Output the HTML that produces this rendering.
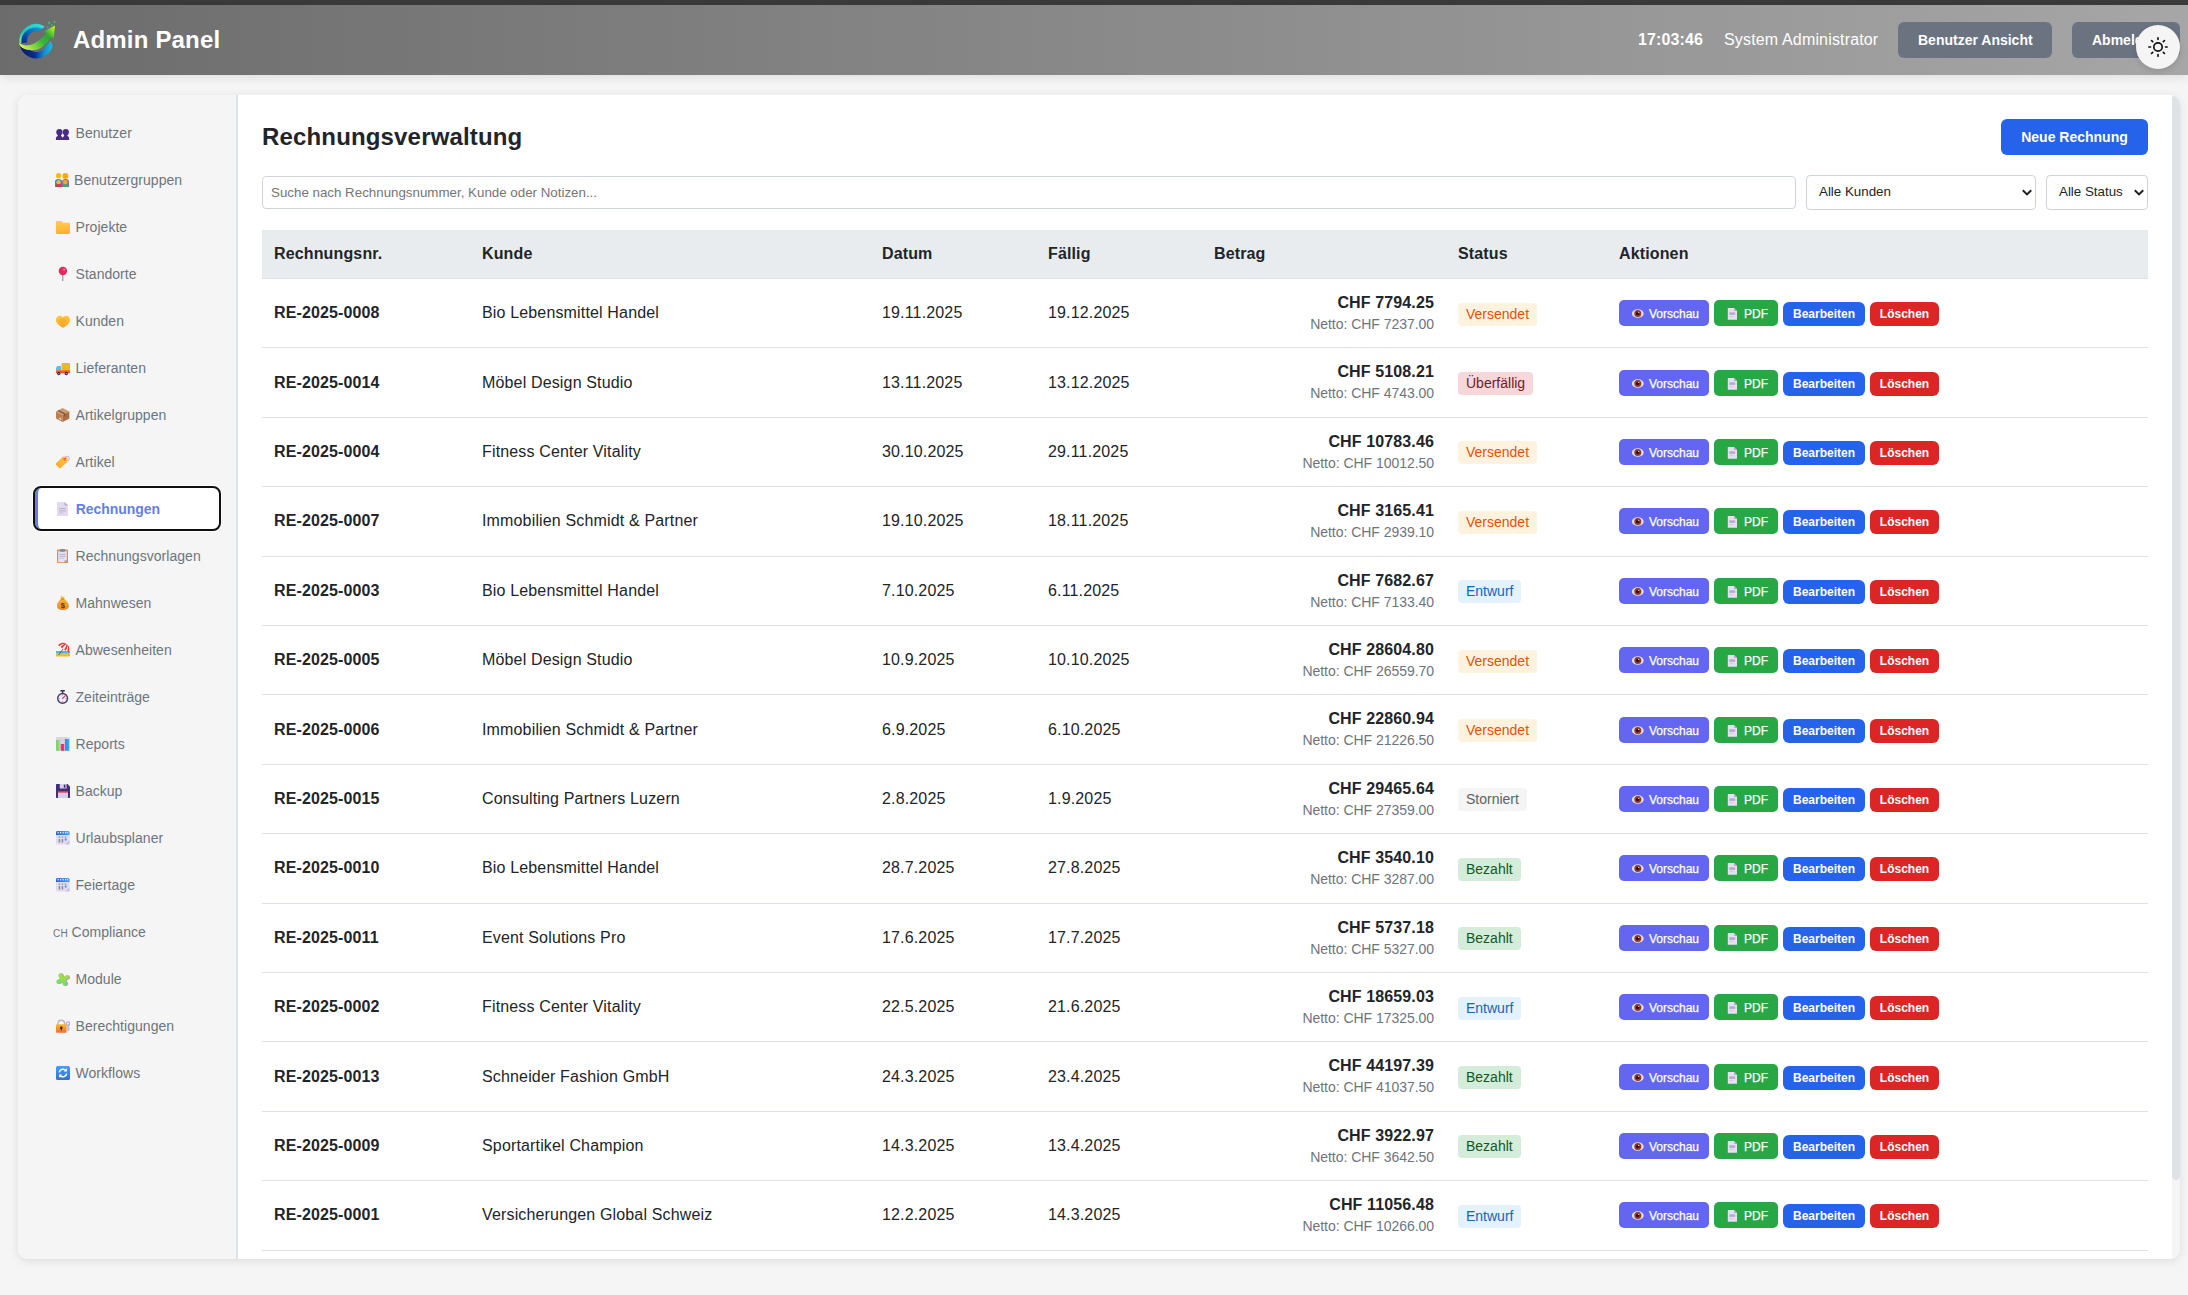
<!DOCTYPE html>
<html lang="de">
<head>
<meta charset="utf-8">
<title>Admin Panel</title>
<style>
*{box-sizing:border-box;margin:0;padding:0}
html,body{width:2188px;height:1295px;overflow:hidden}
body{font-family:"Liberation Sans",Arial,sans-serif;background:#f5f5f5;color:#212529;font-size:16px;line-height:1.5;position:relative}
.topstrip{position:absolute;left:0;top:0;width:2188px;height:5px;background:#3b3b3b}
.header{position:absolute;left:0;top:5px;width:2188px;height:70px;background:linear-gradient(90deg,#6c6c6c 0%,#a6a6a6 100%);box-shadow:0 2px 10px rgba(0,0,0,.1);color:#fff}
.logo{position:absolute;left:12px;top:9px;width:50px;height:50px}
.header h1{position:absolute;left:73px;top:17px;font-size:24px;line-height:36px;font-weight:700;white-space:nowrap;letter-spacing:.18px}
.clock{position:absolute;left:1638px;top:23px;font-size:16px;line-height:24px;font-weight:700;white-space:nowrap;letter-spacing:.12px}
.uname{position:absolute;left:1724px;top:23px;font-size:16px;line-height:24px;white-space:nowrap;letter-spacing:.16px}
.hbtn{position:absolute;top:17px;height:36px;border-radius:6px;background:#6b7280;color:#fff;font-size:14px;font-weight:700;line-height:36px;padding:0 20px;white-space:nowrap}
.toggle{position:absolute;left:2136px;top:25px;width:44px;height:44px;border-radius:50%;background:#f5f5f5;box-shadow:0 2px 6px rgba(0,0,0,.12)}
.toggle svg{position:absolute;left:12px;top:12px;width:20px;height:20px}
.panel{position:absolute;left:18px;top:95px;width:2162px;height:1164px;border-radius:10px;background:#fff;box-shadow:0 2px 10px rgba(0,0,0,.1);overflow:hidden}
.sidebar{position:absolute;left:0;top:0;width:220px;height:1164px;background:#f5f5f5;border-right:2px solid #dee2e6}
.nav{position:absolute;left:17px;width:184px;height:40.4px;border-radius:6px;color:#6c757d;font-size:14px;line-height:41px;white-space:nowrap;border-left:3px solid transparent}
.nav .ic{position:absolute;left:16px;top:12.8px;width:16px;height:16px}
.nav .ch{position:absolute;left:15px;top:1.8px;font-size:10px;letter-spacing:.3px}
.nav .tx{position:absolute;left:37.500px;top:.8px;letter-spacing:.04px}
.nav.active{background:#fff;color:#667eea;font-weight:700;border-left-color:#667eea;outline:2px solid #101010;box-shadow:0 0 0 3px #fff}
.nav.active .tx{left:37.800px;letter-spacing:-.06px}
.main{position:absolute;left:220px;top:0;width:1934px;height:1164px;background:#fff}
.sbar{position:absolute;left:2154px;top:0;width:8px;height:1164px;background:#f5f5f5}
.sbar i{position:absolute;left:0;top:0;width:8px;height:1085px;background:#dee2e6;border-radius:4px}
h2{position:absolute;left:244px;top:24px;font-size:24px;line-height:36px;font-weight:700;color:#212529;white-space:nowrap;letter-spacing:.16px}
.newbtn{position:absolute;left:1983px;top:24px;width:147px;height:36px;border-radius:6px;background:#2563eb;color:#fff;font-size:14px;font-weight:700;line-height:36px;text-align:center}
.search{position:absolute;left:244px;top:81px;width:1534px;height:33px;border:1px solid #ced4da;border-radius:4px;background:#fff;font-size:13.333px;line-height:31px;padding-left:8px;color:#757575;white-space:nowrap}
.sel{position:absolute;top:80px;height:35px;border:1px solid #ced4da;border-radius:4px;background:#fff;font-size:13.333px;line-height:31.500px;padding-left:12px;color:#212529;white-space:nowrap}
.sel svg{position:absolute;right:3px;top:13px;width:10px;height:7px}
table{position:absolute;left:244px;top:135px;width:1886px;border-collapse:separate;border-spacing:0;table-layout:fixed}
th{background:#e9ecef;text-align:left;font-weight:700;font-size:16px;padding:12px;border-bottom:1px solid #dee2e6;color:#212529;line-height:24px;letter-spacing:.14px}
td{padding:12px;border-bottom:1px solid #dee2e6;font-size:16px;line-height:24px;vertical-align:middle;white-space:nowrap;letter-spacing:.155px}
td.num{text-align:right}
td small{display:block;font-size:14px;line-height:20.4px;color:#6c757d;letter-spacing:-.04px;position:relative;top:-1px}
.b{font-weight:700;letter-spacing:.13px}
.badge{letter-spacing:0;position:relative;top:.2px;display:inline-block;height:23px;line-height:23px;padding:0 8px;border-radius:4px;font-size:14px;vertical-align:middle}
.s-sent{background:#fff3e0;color:#e65100}
.s-over{background:#f8d7da;color:#721c24}
.s-draft{background:#e3f2fd;color:#1565c0}
.s-canc{background:#f5f5f5;color:#616161}
.s-paid{background:#d4edda;color:#155724}
.acts{display:flex;align-items:flex-end;gap:5px;height:26px}
.ab{letter-spacing:0;display:block;color:#fff;font-size:12px;white-space:nowrap;position:relative}
.ab.v{width:90px;height:26px;background:#6366f1;border-radius:5px;line-height:28px;padding-left:30px}
.ab.p{width:64px;height:26px;background:#28a745;border-radius:5px;line-height:28px;padding-left:30px}
.ab.e{width:82px;height:24px;background:#2563eb;border-radius:6px;line-height:24px;text-align:center;font-weight:700}
.ab.d{width:69px;height:24px;background:#dc2626;border-radius:6px;line-height:24px;text-align:center;font-weight:700}
.ab svg{position:absolute;left:13px;top:7px;width:12px;height:13px}
.ab.v,.ab.p{-webkit-text-stroke:.25px #fff}
</style>
</head>
<body>
<div class="topstrip"></div>
<div class="header">
<svg class="logo" viewBox="0 0 50 50">
<defs>
<linearGradient id="lgA" x1="0.9" y1="0" x2="0.1" y2="1"><stop offset="0" stop-color="#1fb6d9"/><stop offset="0.45" stop-color="#0a6fc4"/><stop offset="1" stop-color="#0a2585"/></linearGradient>
<linearGradient id="lgR" x1="1" y1="0" x2="0" y2="1"><stop offset="0" stop-color="#3fdcd8"/><stop offset="0.6" stop-color="#1fc4b4"/><stop offset="1" stop-color="#8fe07a"/></linearGradient>
<linearGradient id="lgB" x1="0" y1="0" x2="1" y2="0"><stop offset="0" stop-color="#0a1a78"/><stop offset="0.45" stop-color="#0a2a8c"/><stop offset="0.75" stop-color="#1590cf"/><stop offset="1" stop-color="#19bfe0"/></linearGradient>
<linearGradient id="lgG" x1="0" y1="0.75" x2="1" y2="0.1"><stop offset="0" stop-color="#d8ee58"/><stop offset="0.2" stop-color="#96dc3e"/><stop offset="0.5" stop-color="#38b63a"/><stop offset="0.72" stop-color="#2aa838"/><stop offset="0.88" stop-color="#7ad62c"/><stop offset="1" stop-color="#c0f41a"/></linearGradient>
</defs>
<path d="M32.8 12.4A17 17 0 0 0 7.37 29.6L15.3 28.5A9.4 9.4 0 0 1 27.2 17.6Z" fill="url(#lgA)"/>
<path d="M32.8 12.4A17 17 0 0 0 7.37 29.6L9.4 29.3A14.6 14.6 0 0 1 30 14.6Z" fill="url(#lgR)"/>
<path d="M7.8 31.6A17 17 0 0 0 40.7 32L38.6 27L33.5 32.6A10.5 10.5 0 0 1 14.5 31Z" fill="url(#lgB)"/>
<path d="M7.1 28.6C9.5 31.3 13 31.6 17.4 31C21.5 30.4 27.5 26.5 34.4 19.7L31.7 17.4L43 11.6L41.7 24.7L39.3 23C36 28.5 31.5 33 26 35.2C20 37.4 12 36.3 8.3 32.2C7.5 31 7.1 29.8 7.1 28.6Z" fill="url(#lgG)"/>
<rect x="36.2" y="7.8" width="2" height="1.9" rx=".5" fill="#2fc890"/><rect x="41.7" y="6.9" width="1.8" height="1.8" rx=".5" fill="#52c636"/><rect x="38.8" y="10" width="1.8" height="1.8" rx=".5" fill="#3cc04a"/><rect x="34.7" y="11.9" width="1.8" height="1.8" rx=".5" fill="#19b5d8"/>
</svg>
<h1>Admin Panel</h1>
<span class="clock">17:03:46</span>
<span class="uname">System Administrator</span>
<span class="hbtn" style="left:1898px;width:154px">Benutzer Ansicht</span>
<span class="hbtn" style="left:2072px;width:108px">Abmelden</span>
</div>
<div class="toggle"><svg viewBox="0 0 24 24" fill="none" stroke="#111" stroke-width="2" stroke-linecap="round"><circle cx="12" cy="12" r="5"/><path d="M12 1v2M12 21v2M4.22 4.22l1.42 1.42M18.36 18.36l1.42 1.42M1 12h2M21 12h2M4.22 19.78l1.42-1.42M18.36 5.64l1.42-1.42"/></svg></div>
<div class="panel">
<div class="sidebar">
<div class="nav" style="top:17.2px"><svg class="ic" viewBox="0 0 16 16"><g fill="#452c88"><circle cx="5.4" cy="7.200" r="3.100"/><circle cx="11.800" cy="7.200" r="3.100"/><rect x="3.800" y="8" width="3.200" height="4"/><rect x="10.200" y="8" width="3.200" height="4"/><path d="M1.9 14.9v-1.6c0-1.5 1.4-2.6 3.5-2.6s3.3 1 3.3 2.6c0-1.6 1.2-2.6 3.1-2.6 2.100 0 3.300 1.100 3.300 2.600v1.600z"/></g></svg><span class="tx">Benutzer</span></div>
<div class="nav" style="top:64.2px"><svg class="ic" viewBox="0 0 16 16"><circle cx="4.6" cy="3.6" r="2.7" fill="#fbb81d"/><circle cx="11.4" cy="3.9" r="3" fill="#f9a81a"/><path d="M1 14.900V9.500c0-1.500 1.300-2.600 3.600-2.600s3.400 1.100 3.400 2.600v5.400z" fill="#3f7fe0"/><path d="M8 14.900V9.700c0-1.500 1.300-2.700 3.500-2.700s3.500 1.200 3.500 2.700v5.200z" fill="#8d65c5"/><circle cx="4.600" cy="10.200" r="2.200" fill="#fbb81d"/><circle cx="11.300" cy="10.300" r="2.300" fill="#f9a81a"/><rect x="2" y="12.200" width="5.400" height="2.700" rx=".8" fill="#e8323c"/><rect x="8.600" y="12.200" width="5.600" height="2.700" rx=".8" fill="#2fb55a"/></svg><span class="tx" style="left:36.1px">Benutzergruppen</span></div>
<div class="nav" style="top:111.2px"><svg class="ic" viewBox="0 0 16 16"><defs><linearGradient id="gF" x1="0" y1="0" x2="0" y2="1"><stop offset="0" stop-color="#ffd04a"/><stop offset="1" stop-color="#ffad33"/></linearGradient></defs><path d="M1.900 3.100c0-.7.500-1.200 1.200-1.200h3.700c.5 0 .9.200 1.200.6l.9 1.200h6c.7 0 1.100.5 1.100 1.100v9c0 .6-.5 1.100-1.100 1.100H3c-.6 0-1.100-.5-1.100-1.100z" fill="url(#gF)"/></svg><span class="tx">Projekte</span></div>
<div class="nav" style="top:158.2px"><svg class="ic" viewBox="0 0 16 16"><rect x="8.300" y="8.500" width="1" height="6.500" fill="#8c7fa0"/><circle cx="8.900" cy="5" r="4.200" fill="#e6265c"/><circle cx="10.200" cy="3.500" r="1.100" fill="#ff8fb0"/></svg><span class="tx">Standorte</span></div>
<div class="nav" style="top:205.2px"><svg class="ic" viewBox="0 0 16 16"><defs><linearGradient id="gH" x1="0" y1="0" x2="0" y2="1"><stop offset="0" stop-color="#ffc83d"/><stop offset="1" stop-color="#f5a623"/></linearGradient></defs><path d="M2 6.800c0-2.400 1.700-4.100 3.600-4.100 1.400 0 2.600.700 3.400 1.700.8-1 2-1.700 3.400-1.700 1.900 0 3.600 1.700 3.600 4.100 0 3.800-4.200 6.600-7 8-2.800-1.400-7-4.200-7-8z" fill="url(#gH)"/><path d="M5 7.500l4.500 4M6.500 6l4.500 4M8.500 5l3.500 3.200" stroke="#e89a1a" stroke-width=".8" fill="none"/></svg><span class="tx">Kunden</span></div>
<div class="nav" style="top:252.2px"><svg class="ic" viewBox="0 0 16 16"><rect x="7.500" y="3" width="8.500" height="8" rx="1" fill="#e6b832"/><path d="M2 10.500V8l1.200-2h3.800v4.500z" fill="#4fc3f7"/><rect x="2" y="10.300" width="14" height="3" rx=".8" fill="#f4511e"/><rect x="2" y="10.300" width="14" height="1" fill="#ff7a3a"/><circle cx="4.800" cy="13.500" r="1.700" fill="#3a2566"/><circle cx="12.300" cy="13.500" r="1.700" fill="#3a2566"/><circle cx="4.800" cy="13.500" r=".6" fill="#c9b8e8"/><circle cx="12.300" cy="13.500" r=".6" fill="#c9b8e8"/></svg><span class="tx">Lieferanten</span></div>
<div class="nav" style="top:299.2px"><svg class="ic" viewBox="0 0 16 16"><path d="M8.600 1L15.300 4.500 8.600 8 2 4.500z" fill="#d19a68"/><path d="M2 4.500L8.600 8v7L2 11.500z" fill="#bd7f50"/><path d="M15.300 4.500L8.600 8v7l6.700-3.500z" fill="#a96d42"/><path d="M4.800 3l6.700 3.500v2.300l-1.600.8V7.300L3.300 3.800z" fill="#7d5a48"/><rect x="5.300" y="10.500" width="1.800" height="1.600" fill="#e8e0f0" transform="skewY(27) translate(0 -2.800)"/></svg><span class="tx">Artikelgruppen</span></div>
<div class="nav" style="top:346.2px"><svg class="ic" viewBox="0 0 16 16"><defs><linearGradient id="gT" x1="1" y1="0" x2="0" y2="1"><stop offset="0" stop-color="#ffc83d"/><stop offset="1" stop-color="#ffa52a"/></linearGradient></defs><circle cx="13" cy="4.500" r="2.300" fill="none" stroke="#b9a6e0" stroke-width=".9"/><path d="M2.200 9.300L8.300 2.900c.3-.3.700-.4 1.100-.4l3.100.3c.6.100 1 .5 1 1.100l.2 3.200c0 .4-.1.800-.4 1L6.700 14c-.5.500-1.200.5-1.600 0L2.200 11c-.5-.5-.5-1.200 0-1.700z" fill="url(#gT)"/><circle cx="10.800" cy="5.300" r="1.200" fill="#e8323c"/><circle cx="10.800" cy="5.300" r=".5" fill="#f5f5f5"/></svg><span class="tx">Artikel</span></div>
<div class="nav active" style="top:393.2px"><svg class="ic" viewBox="0 0 16 16"><path d="M3 2c0-.6.400-1 1-1h6.500L14 4.500V14c0 .6-.4 1-1 1H4c-.6 0-1-.4-1-1z" fill="#e3daee"/><path d="M10.500 1v2.500c0 .600.400 1 1 1H14z" fill="#b6a8cc"/><rect x="5" y="7" width="7" height="1.200" fill="#bdb3ca"/><rect x="5" y="9.300" width="7" height="1.200" fill="#bdb3ca"/><rect x="5" y="11.500" width="4.500" height="1" fill="#c9c0d6"/></svg><span class="tx">Rechnungen</span></div>
<div class="nav" style="top:440.2px"><svg class="ic" viewBox="0 0 16 16"><rect x="3" y="1.500" width="11" height="13.500" rx="1" fill="#dc8e52"/><path d="M4.200 3.200h8.600v8.800L10 14.200H4.200z" fill="#e8e2f2"/><path d="M12.800 12L10 14.200V12z" fill="#c9bfd8"/><rect x="6" y="1" width="5" height="2.800" rx=".8" fill="#8b8597"/><rect x="5.300" y="5.800" width="6.400" height="1" fill="#b9b1c6"/><rect x="5.300" y="7.800" width="6.400" height="1" fill="#b9b1c6"/><rect x="5.300" y="9.800" width="4.500" height="1" fill="#c5bdd2"/></svg><span class="tx">Rechnungsvorlagen</span></div>
<div class="nav" style="top:487.2px"><svg class="ic" viewBox="0 0 16 16"><defs><linearGradient id="gM" x1="0" y1="0" x2="0" y2="1"><stop offset="0" stop-color="#fbb62e"/><stop offset="1" stop-color="#e88a28"/></linearGradient></defs><path d="M6.300 1.700L8 1l.8 1 1.700-.600-.400 2.300H7z" fill="#f9c23c"/><path d="M7 3.700h3.100c.5 1 4.800 3.300 4.800 7.200 0 2.700-2.500 4-6.200 4S3 13.600 3 10.900c0-3.900 3.500-6.200 4-7.200z" fill="url(#gM)"/><rect x="6.700" y="3.500" width="3.800" height="1" rx=".5" fill="#c9731e"/><text x="8.900" y="13" font-family="Liberation Sans,sans-serif" font-size="7.500" font-weight="700" fill="#5b3420" text-anchor="middle">$</text></svg><span class="tx">Mahnwesen</span></div>
<div class="nav" style="top:534.2px"><svg class="ic" viewBox="0 0 16 16"><rect x="2" y="9" width="14" height="2.500" fill="#4ab8ea"/><path d="M2 11h14v2.500c0 .6-.4 1-1 1H3c-.6 0-1-.4-1-1z" fill="#fcb72a"/><path d="M9.500 6.500L4.500 13" stroke="#6b4a3a" stroke-width=".9"/><g transform="rotate(35 9.500 6.500)"><path d="M3.300 7c0-3.400 2.800-6 6.200-6s6.200 2.600 6.200 6z" fill="#f8312f"/><path d="M6.300 7c.2-3 1.300-5.500 3.200-6 -1.500.3-4 2.300-4.800 6zM12.700 7c-.2-3-1.300-5.500-3.200-6 1.500.3 4 2.300 4.800 6z" fill="#fff"/><path d="M8.300 7c.1-2.600.5-5 1.200-6 .7 1 1.100 3.400 1.200 6z" fill="#fff"/></g></svg><span class="tx">Abwesenheiten</span></div>
<div class="nav" style="top:581.2px"><svg class="ic" viewBox="0 0 16 16"><rect x="6.300" y="1" width="4.600" height="1.600" rx=".6" fill="#3a3163"/><rect x="7.900" y="2" width="1.400" height="2" fill="#3a3163"/><circle cx="8.600" cy="9.400" r="5.600" fill="#433b6b"/><circle cx="8.600" cy="9.400" r="4.200" fill="#efeaf6"/><path d="M8.600 9.400L11 6.800" stroke="#e8323c" stroke-width="1.100" stroke-linecap="round"/><g fill="#6b6488"><rect x="8.300" y="5.600" width=".6" height="1"/><rect x="8.300" y="12.200" width=".6" height="1"/><rect x="4.800" y="9.100" width="1" height=".6"/><rect x="11.400" y="9.100" width="1" height=".6"/></g></svg><span class="tx">Zeiteinträge</span></div>
<div class="nav" style="top:628.2px"><svg class="ic" viewBox="0 0 16 16"><defs><linearGradient id="gG" x1="0" y1="0" x2="1" y2="0"><stop offset="0" stop-color="#5fd068"/><stop offset="1" stop-color="#a5e85a"/></linearGradient><linearGradient id="gB" x1="0" y1="0" x2="1" y2="0"><stop offset="0" stop-color="#2a8df0"/><stop offset="1" stop-color="#38b0f8"/></linearGradient></defs><rect x="2" y="1" width="13.300" height="13.800" fill="#dcd6e6"/><path d="M6.400 1v13.800M10.600 1v13.800M2 4.500h13.300M2 8h13.300M2 11.500h13.300" stroke="#c9c2d6" stroke-width=".5"/><rect x="2.200" y="4" width="3.800" height="10.800" fill="url(#gG)"/><rect x="6.800" y="8" width="3.400" height="6.800" fill="#e8336d"/><rect x="11" y="3" width="4.300" height="11.800" fill="url(#gB)"/></svg><span class="tx">Reports</span></div>
<div class="nav" style="top:675.2px"><svg class="ic" viewBox="0 0 16 16"><path d="M2 2c0-.6.400-1 1-1h10.500L16 3.500V14c0 .6-.4 1-1 1H3c-.6 0-1-.4-1-1z" fill="#3f2f7a"/><rect x="5.800" y="1" width="6.800" height="4.500" fill="#d8d0e8"/><rect x="9.800" y="1.600" width="1.600" height="3.200" fill="#3f2f7a"/><rect x="4" y="8" width="10" height="7" fill="#d6cde8"/><rect x="4" y="8" width="10" height="1.600" fill="#e8323c"/></svg><span class="tx">Backup</span></div>
<div class="nav" style="top:722.2px"><svg class="ic" viewBox="0 0 16 16"><defs><linearGradient id="gC" x1="0" y1="0" x2="1" y2="0"><stop offset="0" stop-color="#2b5fd0"/><stop offset="1" stop-color="#4aa0f4"/></linearGradient></defs><rect x="2" y="1" width="13.600" height="13.600" rx="1.500" fill="#e2daef"/><path d="M2 5V2.500C2 1.700 2.700 1 3.500 1h10.600c.8 0 1.500.7 1.500 1.500V5z" fill="url(#gC)"/><g fill="#eaf2ff"><rect x="3.500" y="1.800" width="1.200" height="1.600"/><rect x="6" y="1.800" width="1.200" height="1.600"/><rect x="8.500" y="1.800" width="1.200" height="1.600"/><rect x="11" y="1.800" width="1.200" height="1.600"/><rect x="13.300" y="1.800" width="1" height="1.600"/></g><g fill="#8d86a0"><rect x="4.700" y="6.500" width="1.500" height="1.200"/><rect x="7.700" y="6.500" width="1.500" height="1.200"/><rect x="10.700" y="6.500" width="1.500" height="1.200"/><rect x="4.700" y="9" width="1.500" height="3.500"/><rect x="7.700" y="9" width="1.500" height="3.500"/></g><path d="M10.500 8.800h2.300l-1 2.500z" fill="#2f7fe8"/><path d="M15.600 10.500V13c0 .9-.7 1.600-1.600 1.600h-2.500z" fill="#c9bfe0"/></svg><span class="tx">Urlaubsplaner</span></div>
<div class="nav" style="top:769.2px"><svg class="ic" viewBox="0 0 16 16"><defs><linearGradient id="gC2" x1="0" y1="0" x2="1" y2="0"><stop offset="0" stop-color="#2b5fd0"/><stop offset="1" stop-color="#4aa0f4"/></linearGradient></defs><rect x="2" y="1" width="13.600" height="13.600" rx="1.500" fill="#e2daef"/><path d="M2 5V2.500C2 1.700 2.700 1 3.500 1h10.600c.8 0 1.500.7 1.500 1.500V5z" fill="url(#gC2)"/><g fill="#eaf2ff"><rect x="3.500" y="1.800" width="1.200" height="1.600"/><rect x="6" y="1.800" width="1.200" height="1.600"/><rect x="8.500" y="1.800" width="1.200" height="1.600"/><rect x="11" y="1.800" width="1.200" height="1.600"/><rect x="13.300" y="1.800" width="1" height="1.600"/></g><g fill="#8d86a0"><rect x="4.700" y="6.500" width="1.500" height="1.200"/><rect x="7.700" y="6.500" width="1.500" height="1.200"/><rect x="10.700" y="6.500" width="1.500" height="1.200"/><rect x="4.700" y="9" width="1.500" height="3.500"/><rect x="7.700" y="9" width="1.500" height="3.500"/></g><path d="M10.500 8.800h2.300l-1 2.500z" fill="#2f7fe8"/><path d="M15.600 10.500V13c0 .9-.7 1.600-1.600 1.600h-2.500z" fill="#c9bfe0"/></svg><span class="tx">Feiertage</span></div>
<div class="nav" style="top:816.2px"><span class="ch">CH</span><span class="tx" style="left:33.5px">Compliance</span></div>
<div class="nav" style="top:863.2px"><svg class="ic" viewBox="0 0 16 16"><defs><linearGradient id="gP" x1="0" y1="1" x2="1" y2="0"><stop offset="0" stop-color="#5fe070"/><stop offset="1" stop-color="#c4d838"/></linearGradient></defs><g transform="rotate(-28 8.600 8.500)"><path id="pz" d="M6.500 3.800a2.100 2.100 0 0 1 4.200 0v2.600h2.600a2.100 2.100 0 0 1 0 4.200h-2.600v2.600a2.100 2.100 0 0 1-4.200 0v-2.600H3.900a2.100 2.100 0 0 1 0-4.200h2.600z" fill="#a58ad0" transform="translate(.8 .6)"/><path d="M6.500 3.800a2.100 2.100 0 0 1 4.200 0v2.600h2.600a2.100 2.100 0 0 1 0 4.200h-2.600v2.600a2.100 2.100 0 0 1-4.200 0v-2.600H3.900a2.100 2.100 0 0 1 0-4.200h2.600z" fill="url(#gP)"/></g></svg><span class="tx">Module</span></div>
<div class="nav" style="top:910.2px"><svg class="ic" viewBox="0 0 16 16"><defs><linearGradient id="gL" x1="0" y1="0" x2="0" y2="1"><stop offset="0" stop-color="#fcb92c"/><stop offset="1" stop-color="#f46e2a"/></linearGradient></defs><circle cx="14" cy="5.600" r="1.700" fill="none" stroke="#b7a6db" stroke-width="1.300"/><path d="M13.400 7.200h1.300v5.600l-.650.700-.650-.700z" fill="#b7a6db"/><rect x="14.500" y="9.500" width="1.200" height="1" fill="#b7a6db"/><rect x="14.500" y="11.300" width="1" height=".9" fill="#b7a6db"/><path d="M4 7V5.600a3.300 3.300 0 0 1 6.600 0V7" fill="none" stroke="#b9b4c6" stroke-width="1.400"/><rect x="2" y="6.300" width="10.600" height="8.500" rx="1" fill="url(#gL)"/><circle cx="7.300" cy="9.700" r="1.200" fill="#2a1a4a"/><rect x="6.800" y="10" width="1" height="2.600" rx=".4" fill="#2a1a4a"/></svg><span class="tx">Berechtigungen</span></div>
<div class="nav" style="top:957.2px"><svg class="ic" viewBox="0 0 16 16"><defs><linearGradient id="gW" x1="0" y1="0" x2="0" y2="1"><stop offset="0" stop-color="#4a9ef6"/><stop offset="1" stop-color="#386be6"/></linearGradient></defs><rect x="2" y="1" width="14" height="14" rx="1.500" fill="url(#gW)"/><path d="M5.300 7.300a3.800 3.800 0 0 1 6.800-1.600M12.700 8.700a3.800 3.800 0 0 1-6.800 1.600" fill="none" stroke="#fff" stroke-width="1.500"/><path d="M12.900 3.300v3.200H9.700zM5.100 12.700V9.500h3.200z" fill="#fff"/></svg><span class="tx">Workflows</span></div>
</div>
<div class="main"></div>
<h2>Rechnungsverwaltung</h2>
<div class="newbtn">Neue Rechnung</div>
<div class="search">Suche nach Rechnungsnummer, Kunde oder Notizen...</div>
<div class="sel" style="left:1788px;width:230px">Alle Kunden<svg viewBox="0 0 10 7"><path d="M.8 1.2L5 5.4 9.2 1.2" fill="none" stroke="#1f1f1f" stroke-width="2"/></svg></div>
<div class="sel" style="left:2028px;width:102px">Alle Status<svg viewBox="0 0 10 7"><path d="M.8 1.2L5 5.4 9.2 1.2" fill="none" stroke="#1f1f1f" stroke-width="2"/></svg></div>
<table>
<colgroup><col style="width:208px"><col style="width:400px"><col style="width:166px"><col style="width:166px"><col style="width:244px"><col style="width:161px"><col style="width:541px"></colgroup>
<thead><tr><th>Rechnungsnr.</th><th>Kunde</th><th>Datum</th><th>Fällig</th><th>Betrag</th><th>Status</th><th>Aktionen</th></tr></thead>
<tbody>
<tr><td class="b">RE-2025-0008</td><td>Bio Lebensmittel Handel</td><td>19.11.2025</td><td>19.12.2025</td><td class="num"><span class="b">CHF 7794.25</span><small>Netto: CHF 7237.00</small></td><td><span class="badge s-sent">Versendet</span></td><td><div class="acts"><span class="ab v"><svg viewBox="0 0 12 13"><ellipse cx="5.800" cy="6.500" rx="5.900" ry="4.300" fill="#eadcdc"/><circle cx="5.800" cy="6.500" r="3.500" fill="#8a3a30"/><circle cx="5.800" cy="6.500" r="1.700" fill="#2a1414"/><circle cx="6.700" cy="5.400" r=".700" fill="#e8d0d0"/></svg>Vorschau</span><span class="ab p"><svg viewBox="0 0 12 13"><path d="M.8 1h6.200L10 4v8.700H.8z" fill="#e6dff0"/><path d="M7 1v3h3z" fill="#b9a9d0"/><rect x="2.300" y="5.300" width="5.800" height="2.600" fill="#b8adc8"/><rect x="2.300" y="9" width="3.800" height=".8" fill="#cfc6dc"/></svg>PDF</span><span class="ab e">Bearbeiten</span><span class="ab d">Löschen</span></div></td></tr>
<tr><td class="b">RE-2025-0014</td><td>Möbel Design Studio</td><td>13.11.2025</td><td>13.12.2025</td><td class="num"><span class="b">CHF 5108.21</span><small>Netto: CHF 4743.00</small></td><td><span class="badge s-over">Überfällig</span></td><td><div class="acts"><span class="ab v"><svg viewBox="0 0 12 13"><ellipse cx="5.800" cy="6.500" rx="5.900" ry="4.300" fill="#eadcdc"/><circle cx="5.800" cy="6.500" r="3.500" fill="#8a3a30"/><circle cx="5.800" cy="6.500" r="1.700" fill="#2a1414"/><circle cx="6.700" cy="5.400" r=".700" fill="#e8d0d0"/></svg>Vorschau</span><span class="ab p"><svg viewBox="0 0 12 13"><path d="M.8 1h6.200L10 4v8.700H.8z" fill="#e6dff0"/><path d="M7 1v3h3z" fill="#b9a9d0"/><rect x="2.300" y="5.300" width="5.800" height="2.600" fill="#b8adc8"/><rect x="2.300" y="9" width="3.800" height=".8" fill="#cfc6dc"/></svg>PDF</span><span class="ab e">Bearbeiten</span><span class="ab d">Löschen</span></div></td></tr>
<tr><td class="b">RE-2025-0004</td><td>Fitness Center Vitality</td><td>30.10.2025</td><td>29.11.2025</td><td class="num"><span class="b">CHF 10783.46</span><small>Netto: CHF 10012.50</small></td><td><span class="badge s-sent">Versendet</span></td><td><div class="acts"><span class="ab v"><svg viewBox="0 0 12 13"><ellipse cx="5.800" cy="6.500" rx="5.900" ry="4.300" fill="#eadcdc"/><circle cx="5.800" cy="6.500" r="3.500" fill="#8a3a30"/><circle cx="5.800" cy="6.500" r="1.700" fill="#2a1414"/><circle cx="6.700" cy="5.400" r=".700" fill="#e8d0d0"/></svg>Vorschau</span><span class="ab p"><svg viewBox="0 0 12 13"><path d="M.8 1h6.200L10 4v8.700H.8z" fill="#e6dff0"/><path d="M7 1v3h3z" fill="#b9a9d0"/><rect x="2.300" y="5.300" width="5.800" height="2.600" fill="#b8adc8"/><rect x="2.300" y="9" width="3.800" height=".8" fill="#cfc6dc"/></svg>PDF</span><span class="ab e">Bearbeiten</span><span class="ab d">Löschen</span></div></td></tr>
<tr><td class="b">RE-2025-0007</td><td>Immobilien Schmidt &amp; Partner</td><td>19.10.2025</td><td>18.11.2025</td><td class="num"><span class="b">CHF 3165.41</span><small>Netto: CHF 2939.10</small></td><td><span class="badge s-sent">Versendet</span></td><td><div class="acts"><span class="ab v"><svg viewBox="0 0 12 13"><ellipse cx="5.800" cy="6.500" rx="5.900" ry="4.300" fill="#eadcdc"/><circle cx="5.800" cy="6.500" r="3.500" fill="#8a3a30"/><circle cx="5.800" cy="6.500" r="1.700" fill="#2a1414"/><circle cx="6.700" cy="5.400" r=".700" fill="#e8d0d0"/></svg>Vorschau</span><span class="ab p"><svg viewBox="0 0 12 13"><path d="M.8 1h6.200L10 4v8.700H.8z" fill="#e6dff0"/><path d="M7 1v3h3z" fill="#b9a9d0"/><rect x="2.300" y="5.300" width="5.800" height="2.600" fill="#b8adc8"/><rect x="2.300" y="9" width="3.800" height=".8" fill="#cfc6dc"/></svg>PDF</span><span class="ab e">Bearbeiten</span><span class="ab d">Löschen</span></div></td></tr>
<tr><td class="b">RE-2025-0003</td><td>Bio Lebensmittel Handel</td><td>7.10.2025</td><td>6.11.2025</td><td class="num"><span class="b">CHF 7682.67</span><small>Netto: CHF 7133.40</small></td><td><span class="badge s-draft">Entwurf</span></td><td><div class="acts"><span class="ab v"><svg viewBox="0 0 12 13"><ellipse cx="5.800" cy="6.500" rx="5.900" ry="4.300" fill="#eadcdc"/><circle cx="5.800" cy="6.500" r="3.500" fill="#8a3a30"/><circle cx="5.800" cy="6.500" r="1.700" fill="#2a1414"/><circle cx="6.700" cy="5.400" r=".700" fill="#e8d0d0"/></svg>Vorschau</span><span class="ab p"><svg viewBox="0 0 12 13"><path d="M.8 1h6.200L10 4v8.700H.8z" fill="#e6dff0"/><path d="M7 1v3h3z" fill="#b9a9d0"/><rect x="2.300" y="5.300" width="5.800" height="2.600" fill="#b8adc8"/><rect x="2.300" y="9" width="3.800" height=".8" fill="#cfc6dc"/></svg>PDF</span><span class="ab e">Bearbeiten</span><span class="ab d">Löschen</span></div></td></tr>
<tr><td class="b">RE-2025-0005</td><td>Möbel Design Studio</td><td>10.9.2025</td><td>10.10.2025</td><td class="num"><span class="b">CHF 28604.80</span><small>Netto: CHF 26559.70</small></td><td><span class="badge s-sent">Versendet</span></td><td><div class="acts"><span class="ab v"><svg viewBox="0 0 12 13"><ellipse cx="5.800" cy="6.500" rx="5.900" ry="4.300" fill="#eadcdc"/><circle cx="5.800" cy="6.500" r="3.500" fill="#8a3a30"/><circle cx="5.800" cy="6.500" r="1.700" fill="#2a1414"/><circle cx="6.700" cy="5.400" r=".700" fill="#e8d0d0"/></svg>Vorschau</span><span class="ab p"><svg viewBox="0 0 12 13"><path d="M.8 1h6.200L10 4v8.700H.8z" fill="#e6dff0"/><path d="M7 1v3h3z" fill="#b9a9d0"/><rect x="2.300" y="5.300" width="5.800" height="2.600" fill="#b8adc8"/><rect x="2.300" y="9" width="3.800" height=".8" fill="#cfc6dc"/></svg>PDF</span><span class="ab e">Bearbeiten</span><span class="ab d">Löschen</span></div></td></tr>
<tr><td class="b">RE-2025-0006</td><td>Immobilien Schmidt &amp; Partner</td><td>6.9.2025</td><td>6.10.2025</td><td class="num"><span class="b">CHF 22860.94</span><small>Netto: CHF 21226.50</small></td><td><span class="badge s-sent">Versendet</span></td><td><div class="acts"><span class="ab v"><svg viewBox="0 0 12 13"><ellipse cx="5.800" cy="6.500" rx="5.900" ry="4.300" fill="#eadcdc"/><circle cx="5.800" cy="6.500" r="3.500" fill="#8a3a30"/><circle cx="5.800" cy="6.500" r="1.700" fill="#2a1414"/><circle cx="6.700" cy="5.400" r=".700" fill="#e8d0d0"/></svg>Vorschau</span><span class="ab p"><svg viewBox="0 0 12 13"><path d="M.8 1h6.200L10 4v8.700H.8z" fill="#e6dff0"/><path d="M7 1v3h3z" fill="#b9a9d0"/><rect x="2.300" y="5.300" width="5.800" height="2.600" fill="#b8adc8"/><rect x="2.300" y="9" width="3.800" height=".8" fill="#cfc6dc"/></svg>PDF</span><span class="ab e">Bearbeiten</span><span class="ab d">Löschen</span></div></td></tr>
<tr><td class="b">RE-2025-0015</td><td>Consulting Partners Luzern</td><td>2.8.2025</td><td>1.9.2025</td><td class="num"><span class="b">CHF 29465.64</span><small>Netto: CHF 27359.00</small></td><td><span class="badge s-canc">Storniert</span></td><td><div class="acts"><span class="ab v"><svg viewBox="0 0 12 13"><ellipse cx="5.800" cy="6.500" rx="5.900" ry="4.300" fill="#eadcdc"/><circle cx="5.800" cy="6.500" r="3.500" fill="#8a3a30"/><circle cx="5.800" cy="6.500" r="1.700" fill="#2a1414"/><circle cx="6.700" cy="5.400" r=".700" fill="#e8d0d0"/></svg>Vorschau</span><span class="ab p"><svg viewBox="0 0 12 13"><path d="M.8 1h6.200L10 4v8.700H.8z" fill="#e6dff0"/><path d="M7 1v3h3z" fill="#b9a9d0"/><rect x="2.300" y="5.300" width="5.800" height="2.600" fill="#b8adc8"/><rect x="2.300" y="9" width="3.800" height=".8" fill="#cfc6dc"/></svg>PDF</span><span class="ab e">Bearbeiten</span><span class="ab d">Löschen</span></div></td></tr>
<tr><td class="b">RE-2025-0010</td><td>Bio Lebensmittel Handel</td><td>28.7.2025</td><td>27.8.2025</td><td class="num"><span class="b">CHF 3540.10</span><small>Netto: CHF 3287.00</small></td><td><span class="badge s-paid">Bezahlt</span></td><td><div class="acts"><span class="ab v"><svg viewBox="0 0 12 13"><ellipse cx="5.800" cy="6.500" rx="5.900" ry="4.300" fill="#eadcdc"/><circle cx="5.800" cy="6.500" r="3.500" fill="#8a3a30"/><circle cx="5.800" cy="6.500" r="1.700" fill="#2a1414"/><circle cx="6.700" cy="5.400" r=".700" fill="#e8d0d0"/></svg>Vorschau</span><span class="ab p"><svg viewBox="0 0 12 13"><path d="M.8 1h6.200L10 4v8.700H.8z" fill="#e6dff0"/><path d="M7 1v3h3z" fill="#b9a9d0"/><rect x="2.300" y="5.300" width="5.800" height="2.600" fill="#b8adc8"/><rect x="2.300" y="9" width="3.800" height=".8" fill="#cfc6dc"/></svg>PDF</span><span class="ab e">Bearbeiten</span><span class="ab d">Löschen</span></div></td></tr>
<tr><td class="b">RE-2025-0011</td><td>Event Solutions Pro</td><td>17.6.2025</td><td>17.7.2025</td><td class="num"><span class="b">CHF 5737.18</span><small>Netto: CHF 5327.00</small></td><td><span class="badge s-paid">Bezahlt</span></td><td><div class="acts"><span class="ab v"><svg viewBox="0 0 12 13"><ellipse cx="5.800" cy="6.500" rx="5.900" ry="4.300" fill="#eadcdc"/><circle cx="5.800" cy="6.500" r="3.500" fill="#8a3a30"/><circle cx="5.800" cy="6.500" r="1.700" fill="#2a1414"/><circle cx="6.700" cy="5.400" r=".700" fill="#e8d0d0"/></svg>Vorschau</span><span class="ab p"><svg viewBox="0 0 12 13"><path d="M.8 1h6.200L10 4v8.700H.8z" fill="#e6dff0"/><path d="M7 1v3h3z" fill="#b9a9d0"/><rect x="2.300" y="5.300" width="5.800" height="2.600" fill="#b8adc8"/><rect x="2.300" y="9" width="3.800" height=".8" fill="#cfc6dc"/></svg>PDF</span><span class="ab e">Bearbeiten</span><span class="ab d">Löschen</span></div></td></tr>
<tr><td class="b">RE-2025-0002</td><td>Fitness Center Vitality</td><td>22.5.2025</td><td>21.6.2025</td><td class="num"><span class="b">CHF 18659.03</span><small>Netto: CHF 17325.00</small></td><td><span class="badge s-draft">Entwurf</span></td><td><div class="acts"><span class="ab v"><svg viewBox="0 0 12 13"><ellipse cx="5.800" cy="6.500" rx="5.900" ry="4.300" fill="#eadcdc"/><circle cx="5.800" cy="6.500" r="3.500" fill="#8a3a30"/><circle cx="5.800" cy="6.500" r="1.700" fill="#2a1414"/><circle cx="6.700" cy="5.400" r=".700" fill="#e8d0d0"/></svg>Vorschau</span><span class="ab p"><svg viewBox="0 0 12 13"><path d="M.8 1h6.200L10 4v8.700H.8z" fill="#e6dff0"/><path d="M7 1v3h3z" fill="#b9a9d0"/><rect x="2.300" y="5.300" width="5.800" height="2.600" fill="#b8adc8"/><rect x="2.300" y="9" width="3.800" height=".8" fill="#cfc6dc"/></svg>PDF</span><span class="ab e">Bearbeiten</span><span class="ab d">Löschen</span></div></td></tr>
<tr><td class="b">RE-2025-0013</td><td>Schneider Fashion GmbH</td><td>24.3.2025</td><td>23.4.2025</td><td class="num"><span class="b">CHF 44197.39</span><small>Netto: CHF 41037.50</small></td><td><span class="badge s-paid">Bezahlt</span></td><td><div class="acts"><span class="ab v"><svg viewBox="0 0 12 13"><ellipse cx="5.800" cy="6.500" rx="5.900" ry="4.300" fill="#eadcdc"/><circle cx="5.800" cy="6.500" r="3.500" fill="#8a3a30"/><circle cx="5.800" cy="6.500" r="1.700" fill="#2a1414"/><circle cx="6.700" cy="5.400" r=".700" fill="#e8d0d0"/></svg>Vorschau</span><span class="ab p"><svg viewBox="0 0 12 13"><path d="M.8 1h6.200L10 4v8.700H.8z" fill="#e6dff0"/><path d="M7 1v3h3z" fill="#b9a9d0"/><rect x="2.300" y="5.300" width="5.800" height="2.600" fill="#b8adc8"/><rect x="2.300" y="9" width="3.800" height=".8" fill="#cfc6dc"/></svg>PDF</span><span class="ab e">Bearbeiten</span><span class="ab d">Löschen</span></div></td></tr>
<tr><td class="b">RE-2025-0009</td><td>Sportartikel Champion</td><td>14.3.2025</td><td>13.4.2025</td><td class="num"><span class="b">CHF 3922.97</span><small>Netto: CHF 3642.50</small></td><td><span class="badge s-paid">Bezahlt</span></td><td><div class="acts"><span class="ab v"><svg viewBox="0 0 12 13"><ellipse cx="5.800" cy="6.500" rx="5.900" ry="4.300" fill="#eadcdc"/><circle cx="5.800" cy="6.500" r="3.500" fill="#8a3a30"/><circle cx="5.800" cy="6.500" r="1.700" fill="#2a1414"/><circle cx="6.700" cy="5.400" r=".700" fill="#e8d0d0"/></svg>Vorschau</span><span class="ab p"><svg viewBox="0 0 12 13"><path d="M.8 1h6.200L10 4v8.700H.8z" fill="#e6dff0"/><path d="M7 1v3h3z" fill="#b9a9d0"/><rect x="2.300" y="5.300" width="5.800" height="2.600" fill="#b8adc8"/><rect x="2.300" y="9" width="3.800" height=".8" fill="#cfc6dc"/></svg>PDF</span><span class="ab e">Bearbeiten</span><span class="ab d">Löschen</span></div></td></tr>
<tr><td class="b">RE-2025-0001</td><td>Versicherungen Global Schweiz</td><td>12.2.2025</td><td>14.3.2025</td><td class="num"><span class="b">CHF 11056.48</span><small>Netto: CHF 10266.00</small></td><td><span class="badge s-draft">Entwurf</span></td><td><div class="acts"><span class="ab v"><svg viewBox="0 0 12 13"><ellipse cx="5.800" cy="6.500" rx="5.900" ry="4.300" fill="#eadcdc"/><circle cx="5.800" cy="6.500" r="3.500" fill="#8a3a30"/><circle cx="5.800" cy="6.500" r="1.700" fill="#2a1414"/><circle cx="6.700" cy="5.400" r=".700" fill="#e8d0d0"/></svg>Vorschau</span><span class="ab p"><svg viewBox="0 0 12 13"><path d="M.8 1h6.200L10 4v8.700H.8z" fill="#e6dff0"/><path d="M7 1v3h3z" fill="#b9a9d0"/><rect x="2.300" y="5.300" width="5.800" height="2.600" fill="#b8adc8"/><rect x="2.300" y="9" width="3.800" height=".8" fill="#cfc6dc"/></svg>PDF</span><span class="ab e">Bearbeiten</span><span class="ab d">Löschen</span></div></td></tr>
<tr><td class="b">RE-2025-0012</td><td>Möbel Design Studio</td><td>5.1.2025</td><td>4.2.2025</td><td class="num"><span class="b">CHF 9120.55</span><small>Netto: CHF 8469.40</small></td><td><span class="badge s-paid">Bezahlt</span></td><td><div class="acts"><span class="ab v"><svg viewBox="0 0 12 13"><ellipse cx="5.800" cy="6.500" rx="5.900" ry="4.300" fill="#eadcdc"/><circle cx="5.800" cy="6.500" r="3.500" fill="#8a3a30"/><circle cx="5.800" cy="6.500" r="1.700" fill="#2a1414"/><circle cx="6.700" cy="5.400" r=".700" fill="#e8d0d0"/></svg>Vorschau</span><span class="ab p"><svg viewBox="0 0 12 13"><path d="M.8 1h6.200L10 4v8.700H.8z" fill="#e6dff0"/><path d="M7 1v3h3z" fill="#b9a9d0"/><rect x="2.300" y="5.300" width="5.800" height="2.600" fill="#b8adc8"/><rect x="2.300" y="9" width="3.800" height=".8" fill="#cfc6dc"/></svg>PDF</span><span class="ab e">Bearbeiten</span><span class="ab d">Löschen</span></div></td></tr>
</tbody>
</table>
<div class="sbar"><i></i></div>
</div>
</body>
</html>
